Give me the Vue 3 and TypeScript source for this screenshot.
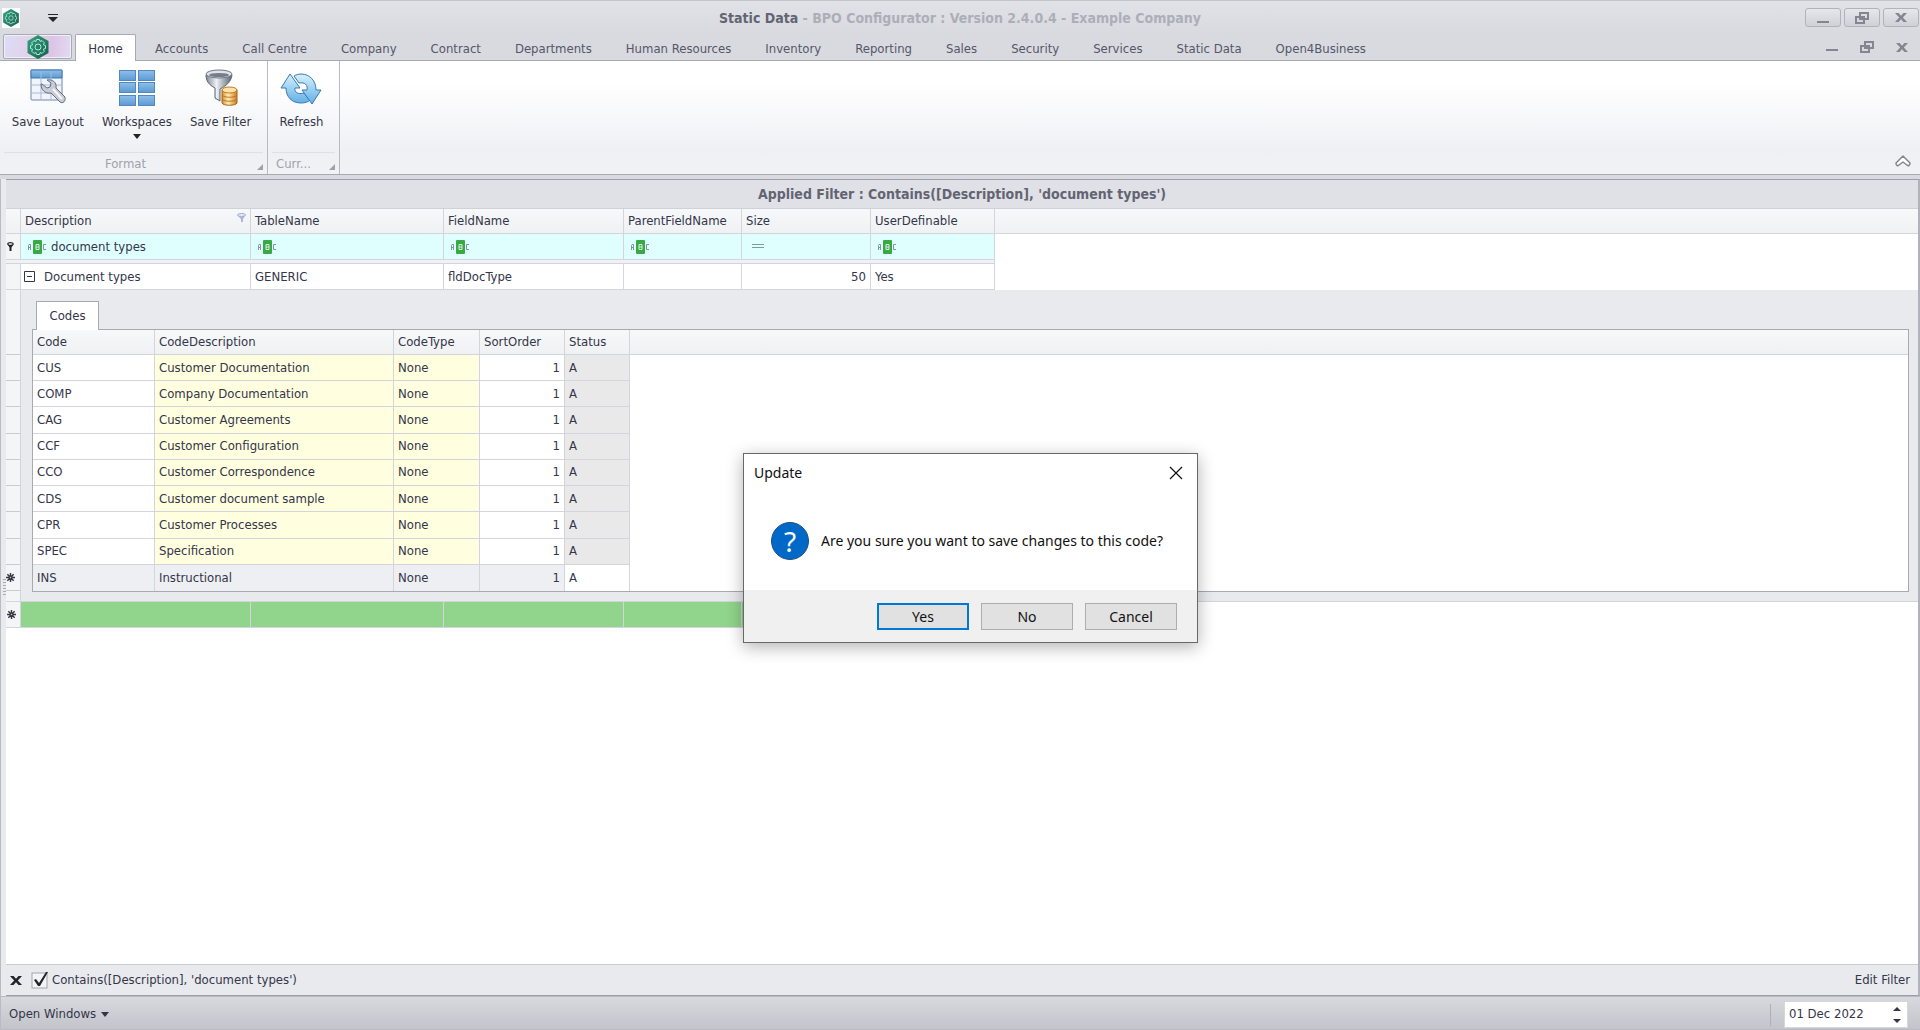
<script setup lang="ts">
import { ref } from 'vue'

interface CodeRow {
  code: string
  description: string
}

const tabs: string[] = [
  'Home', 'Accounts', 'Call Centre', 'Company', 'Contract', 'Departments', 'Human Resources',
  'Inventory', 'Reporting', 'Sales', 'Security', 'Services', 'Static Data', 'Open4Business',
]
const columns: string[] = ['Description', 'TableName', 'FieldName', 'ParentFieldName', 'Size', 'UserDefinable']
const codes: CodeRow[] = [
  { code: 'CUS', description: 'Customer Documentation' },
  { code: 'COMP', description: 'Company Documentation' },
  { code: 'CAG', description: 'Customer Agreements' },
  { code: 'CCF', description: 'Customer Configuration' },
  { code: 'CCO', description: 'Customer Correspondence' },
  { code: 'CDS', description: 'Customer document sample' },
  { code: 'CPR', description: 'Customer Processes' },
  { code: 'SPEC', description: 'Specification' },
  { code: 'INS', description: 'Instructional' },
]

const activeTab = ref('Home')
const filterText = ref('document types')
const filterOn = ref(true)
const workDate = ref('01 Dec 2022')
const dialogOpen = ref(true)
</script>

<template>
  <div class="app">
    <svg class="defs" width="0" height="0" aria-hidden="true">
      <defs>
        <linearGradient id="g-green" x1="0" y1="0" x2="1" y2="1">
          <stop offset="0" stop-color="#35a583" /><stop offset="1" stop-color="#125f4a" />
        </linearGradient>
        <linearGradient id="g-blue" x1="0" y1="0" x2="0" y2="1">
          <stop offset="0" stop-color="#8fbfe8" /><stop offset="1" stop-color="#5b9ad2" />
        </linearGradient>
        <linearGradient id="g-sky" x1="0" y1="0" x2="0" y2="1">
          <stop offset="0" stop-color="#d8f1fc" /><stop offset="1" stop-color="#62b0e6" />
        </linearGradient>
        <linearGradient id="g-steel" x1="0" y1="0" x2="1" y2="0">
          <stop offset="0" stop-color="#7f8794" /><stop offset="0.4" stop-color="#eef1f5" /><stop offset="1" stop-color="#59616f" />
        </linearGradient>
        <linearGradient id="g-gold" x1="0" y1="0" x2="1" y2="0">
          <stop offset="0" stop-color="#d98a1e" /><stop offset="0.4" stop-color="#fff0b8" /><stop offset="1" stop-color="#d07a18" />
        </linearGradient>
        <symbol id="logo" viewBox="0 0 24 24">
          <path d="M12 0 22.500 6v12L12 24 1.500 18V6z" fill="url(#g-green)" />
          <g fill="none" stroke="#b9e6d6">
            <path stroke-width="1" d="M10.500 4.500h3l.6 2 2-.9 2.200 2.200-.9 2 2.100.7v3l-2.100.7.9 2-2.200 2.200-2-.9-.6 2h-3l-.6-2-2 .9-2.200-2.200.9-2-2.100-.7v-3l2.100-.7-.9-2 2.200-2.200 2 .9z" />
            <circle cx="12" cy="12" r="3" stroke-width="1" />
          </g>
        </symbol>
        <symbol id="restore" viewBox="0 0 14 12">
          <path d="M5 1h8v6H5z M1 5h8v6H1z" fill="none" stroke="#83858f" stroke-width="2" />
        </symbol>
        <symbol id="cross" viewBox="0 0 12 9">
          <path d="M0 0h3.500L6 2.800 8.500 0H12L7.800 4.500 12 9H8.500L6 6.200 3.500 9H0l4.200-4.500z" />
        </symbol>
        <symbol id="abc" viewBox="0 0 20 14">
          <path d="M1.500 10V5.500L2 4.500h1.500V10M1.500 7.500h2" fill="none" stroke="#7d9896" />
          <rect x="6" y="0" width="9" height="14" rx="1" fill="#39a845" />
          <path d="M9 4.500h3v5H9zM9 7h3" fill="none" stroke="#d9f5e0" />
          <path d="M19 4.500h-2.500v5H19" fill="none" stroke="#7d9896" />
        </symbol>
        <symbol id="star" viewBox="0 0 10 10">
          <path d="M5 0v10M0 5h10M1.500 1.500l7 7M8.500 1.500l-7 7" stroke="#34353f" stroke-width="1.600" />
          <circle cx="5" cy="5" r="0.800" fill="#c9cad2" />
        </symbol>
      </defs>
    </svg>

    <header class="titlebar">
      <div class="quick">
        <svg class="mini-logo" width="18" height="20"><use href="#logo" /></svg>
        <button class="bare" aria-label="Customise quick access">
          <svg width="10" height="8" viewBox="0 0 10 8"><path d="M0 0h10v1H0zM0 3h10L5 8z" fill="#23232d" /></svg>
        </button>
      </div>
      <h1><strong>Static Data</strong> - BPO Configurator : Version 2.4.0.4 - Example Company</h1>
      <div class="window-buttons">
        <button aria-label="Minimise"><svg width="12" height="12"><path d="M0 9h12v2H0z" fill="#83858f" /></svg></button>
        <button aria-label="Restore"><svg width="14" height="12"><use href="#restore" /></svg></button>
        <button aria-label="Close"><svg width="12" height="9" fill="#83858f"><use href="#cross" /></svg></button>
      </div>
    </header>

    <nav class="tabs">
      <button class="app-button" aria-label="Application menu"><svg width="24" height="24"><use href="#logo" /></svg></button>
      <button v-for="tab in tabs" :key="tab" class="tab" :class="{ active: tab === activeTab }" @click="activeTab = tab">{{ tab }}</button>
      <div class="child-buttons">
        <button class="bare" aria-label="Minimise child"><svg width="12" height="12"><path d="M0 8h12v2H0z" fill="#83858f" /></svg></button>
        <button class="bare" aria-label="Restore child"><svg width="14" height="12"><use href="#restore" /></svg></button>
        <button class="bare" aria-label="Close child"><svg width="12" height="9" fill="#83858f"><use href="#cross" /></svg></button>
      </div>
    </nav>

    <section class="ribbon">
      <div class="group format">
        <div class="tools">
          <button class="tool">
            <svg width="38" height="38" viewBox="0 0 38 38">
              <rect x="2" y="1" width="31" height="30" rx="1" fill="#f1f5fb" stroke="#6e86b0" />
              <path d="M2 1h31v8H2z" fill="url(#g-blue)" stroke="#3f78b5" />
              <path d="M12 2v29M22 2v29M2 16h31M2 24h31" stroke="#a7b9da" fill="none" />
              <path d="M13 15l5 4 3-1 1-4-4-3c5-1 10 2 9 8l9 9c1 4-2 7-5 5l-9-9c-6 1-10-3-10-9z" fill="#c9ccd5" stroke="#646d80" />
              <path d="M24 20l9 10" stroke="#f5f6f8" stroke-width="2" />
            </svg>
            <span>Save Layout</span>
          </button>
          <button class="tool">
            <svg width="38" height="38" viewBox="0 0 38 38" fill="url(#g-blue)" stroke="#5089c2">
              <rect x="1.500" y="1.500" width="16" height="10" /><rect x="20.500" y="1.500" width="16" height="10" />
              <rect x="1.500" y="13.500" width="16" height="10" /><rect x="20.500" y="13.500" width="16" height="10" />
              <rect x="1.500" y="26.500" width="16" height="10" /><rect x="20.500" y="26.500" width="16" height="10" />
            </svg>
            <span>Workspaces</span>
            <svg width="8" height="5"><path d="M0 0h8L4 5z" fill="#23232d" /></svg>
          </button>
          <button class="tool">
            <svg width="38" height="38" viewBox="0 0 38 38">
              <path d="M4 6c0 6 3 10 9 13v10l5 3V20c6-3 11-7 12-14z" fill="url(#g-steel)" stroke="#5c6470" />
              <ellipse cx="17" cy="5" rx="13" ry="4" fill="#dfe3e8" stroke="#717985" />
              <ellipse cx="17" cy="6" rx="10" ry="2" fill="#747c89" />
              <path d="M20 21v13c1 3 14 3 15 0V21z" fill="url(#g-gold)" stroke="#a5621b" />
              <ellipse cx="27.500" cy="21" rx="7.500" ry="3" fill="#fbe3a4" stroke="#b8762a" />
              <path d="M20 26c2 3 13 3 15 0M20 30c2 3 13 3 15 0" fill="none" stroke="#b8762a" />
            </svg>
            <span>Save Filter</span>
          </button>
        </div>
        <footer>Format<svg width="6" height="6"><path d="M6 0v6H0z" fill="#a0a1aa" /></svg></footer>
      </div>
      <div class="group current">
        <div class="tools">
          <button class="tool">
            <svg width="42" height="38" viewBox="0 0 42 38" fill="url(#g-sky)" stroke="#3979b3" stroke-linejoin="round">
              <path d="M10 5 1 19h5c0 9 6 15 15 15 4 0 7-1 9-3l-6-7c-6 2-10-1-9-5h5z" />
              <path d="M32 35l9-14h-5c0-9-6-16-15-16-3 0-5 1-7 2l5 7c6-1 9 2 8 7h-5z" />
            </svg>
            <span>Refresh</span>
          </button>
        </div>
        <footer>Curr...<svg width="6" height="6"><path d="M6 0v6H0z" fill="#a0a1aa" /></svg></footer>
      </div>
      <button class="bare collapse" aria-label="Collapse ribbon">
        <svg width="16" height="12" viewBox="0 0 16 12" fill="#fff" stroke="#85868f" stroke-width="1.500" stroke-linejoin="round"><path d="M8 1 1 8c0 3 2 3 3 2l4-3 4 3c1 1 3 1 3-2z" /></svg>
      </button>
    </section>

    <main class="workspace">
      <div class="splitter"><i></i></div>
      <div class="panel">
        <h2>Applied Filter : Contains([Description], 'document types')</h2>
        <table class="grid">
          <colgroup>
            <col class="c-ind" /><col class="c-desc" /><col class="c-table" /><col class="c-field" /><col class="c-parent" /><col class="c-size" /><col class="c-user" /><col />
          </colgroup>
          <thead>
            <tr>
              <th></th>
              <th v-for="(column, i) in columns" :key="column">
                <div class="head">{{ column }}
                  <svg v-if="i === 0" width="9" height="10" viewBox="0 0 9 10"><ellipse cx="4.500" cy="2" rx="4" ry="1.500" fill="#e6ebf6" stroke="#9aa9cc" /><path d="M1 3h7L6 6v3H4V6z" fill="#a9b6d6" /></svg>
                </div>
              </th>
              <th class="rest"></th>
            </tr>
          </thead>
          <tbody>
            <tr class="filter-row">
              <td class="ind"><svg width="7" height="9" viewBox="0 0 7 9"><ellipse cx="3.500" cy="2" rx="2.700" ry="1.300" fill="#fff" stroke="#23232d" stroke-width="1.200" /><path d="M1 3h5L4.500 5.500V9h-2V5.500z" fill="#23232d" /></svg></td>
              <td v-for="(column, i) in columns" :key="column">
                <div class="filter-cell">
                  <svg v-if="column === 'Size'" class="equals" width="12" height="5"><path d="M0 0h12v1H0zM0 3h12v1H0z" fill="#8199a3" /></svg>
                  <svg v-else width="20" height="14"><use href="#abc" /></svg>
                  <input v-if="i === 0" v-model="filterText" aria-label="Description filter" />
                </div>
              </td>
              <td class="rest"></td>
            </tr>
            <tr class="divider"><td colspan="7"></td><td class="rest"></td></tr>
            <tr class="data-row">
              <td class="ind"></td>
              <td>
                <div class="expand">
                  <button class="bare" aria-label="Collapse row"><svg width="12" height="12"><path d="M.5.5h10v10H.5zM3 5.500h5" fill="none" stroke="#34354a" /></svg></button>
                  Document types
                </div>
              </td>
              <td>GENERIC</td>
              <td>fldDocType</td>
              <td></td>
              <td class="num">50</td>
              <td>Yes</td>
              <td class="rest"></td>
            </tr>
            <tr class="detail-row">
              <td class="gutter">
                <div class="marks">
                  <i class="top"></i>
                  <i v-for="row in codes" :key="row.code"><svg v-if="row.code === 'INS'" width="9" height="9"><use href="#star" /></svg></i>
                  <i class="bottom"></i>
                </div>
              </td>
              <td colspan="7" class="detail">
                <button class="detail-tab">Codes</button>
                <div class="codes-frame">
                  <table class="codes">
                    <colgroup><col class="k-code" /><col class="k-desc" /><col class="k-type" /><col class="k-sort" /><col class="k-status" /><col /></colgroup>
                    <thead>
                      <tr><th>Code</th><th>CodeDescription</th><th>CodeType</th><th>SortOrder</th><th>Status</th><th class="rest"></th></tr>
                    </thead>
                    <tbody>
                      <tr v-for="row in codes" :key="row.code" :class="{ fresh: row.code === 'INS' }">
                        <td>{{ row.code }}</td>
                        <td class="key">{{ row.description }}</td>
                        <td class="key">None</td>
                        <td class="num">1</td>
                        <td class="status">A</td>
                        <td class="rest"></td>
                      </tr>
                    </tbody>
                  </table>
                </div>
              </td>
            </tr>
            <tr class="new-row">
              <td class="ind"><svg width="9" height="9"><use href="#star" /></svg></td>
              <td v-for="column in columns" :key="column"></td>
              <td class="rest"></td>
            </tr>
          </tbody>
        </table>
        <div class="filter-bar">
          <button class="bare" aria-label="Clear filter"><svg width="12" height="9" fill="#23232d"><use href="#cross" /></svg></button>
          <label><input v-model="filterOn" type="checkbox" />
            <svg class="tick" width="18" height="18" viewBox="0 0 18 18"><rect x="1" y="2" width="15" height="15" fill="#f4f4f6" stroke="#a3a4ac" /><path v-if="filterOn" d="M3 9l2-1 3 4 7-11 2 0-8 14H7z" fill="#23232d" /></svg>
            Contains([Description], 'document types')</label>
          <button class="bare edit">Edit Filter</button>
        </div>
      </div>
    </main>

    <footer class="statusbar">
      <button class="bare open">Open Windows <svg width="8" height="5"><path d="M0 0h8L4 5z" fill="#34354a" /></svg></button>
      <div class="date">
        <input v-model="workDate" aria-label="Date" />
        <div class="spin">
          <button class="bare" aria-label="Next day"><svg width="8" height="4"><path d="M0 4h8L4 0z" fill="#34354a" /></svg></button>
          <button class="bare" aria-label="Previous day"><svg width="8" height="4"><path d="M0 0h8L4 4z" fill="#34354a" /></svg></button>
        </div>
      </div>
    </footer>

    <div v-if="dialogOpen" class="dialog" role="dialog" aria-labelledby="dialog-title">
      <div class="dialog-head">
        <span id="dialog-title">Update</span>
        <button class="bare" aria-label="Close dialog" @click="dialogOpen = false"><svg width="14" height="14"><path d="M1 1l12 12M13 1 1 13" stroke="#111" stroke-width="1.200" /></svg></button>
      </div>
      <div class="dialog-body">
        <div class="question">?</div>
        <p>Are you sure you want to save changes to this code?</p>
      </div>
      <div class="dialog-foot">
        <button class="primary" @click="dialogOpen = false">Yes</button>
        <button @click="dialogOpen = false">No</button>
        <button @click="dialogOpen = false">Cancel</button>
      </div>
    </div>
  </div>
</template>

<style>
body {
  margin: 0;
}
</style>

<style scoped>
* {
  box-sizing: border-box;
}
.app {
  position: relative;
  display: flex;
  flex-direction: column;
  min-height: 100vh;
  background: #fff;
  color: #34354a;
  font: 13px/16px "DejaVu Sans Condensed", "Noto Sans", sans-serif;
}
.defs {
  position: absolute;
}
svg {
  display: block;
  flex: none;
}
button,
input {
  margin: 0;
  padding: 0;
  border: 0;
  background: none;
  color: inherit;
  font: inherit;
}
.titlebar {
  display: grid;
  grid-template-columns: 120px 1fr 120px;
  align-items: center;
  height: 34px;
  border-top: 1px solid #c3c5cd;
  background: linear-gradient(#e1e2e7, #d9dadf);
}
.quick {
  display: flex;
  align-items: center;
  gap: 28px;
  padding-left: 2px;
}
.mini-logo {
  background: #fff;
}
h1 {
  margin: 0;
  color: #acaeb8;
  font-size: 14px;
  line-height: 16px;
  text-align: center;
}
h1 strong {
  color: #636473;
}
.window-buttons {
  display: flex;
  justify-content: flex-end;
  gap: 3px;
  padding-right: 1px;
}
.window-buttons button {
  display: grid;
  place-items: center;
  width: 36px;
  height: 19px;
  border: 1px solid #b1b3bc;
  border-radius: 3px;
  background: linear-gradient(#e6e7eb, #d0d1d7);
}
.tabs {
  display: flex;
  height: 27px;
  padding-left: 3px;
  border-bottom: 1px solid #a7a9b3;
  background: #d9dadf;
}
.app-button {
  display: grid;
  place-items: center;
  width: 69px;
  height: 25px;
  margin-right: 3px;
  border: 1px solid #a7a9b3;
  border-radius: 2px;
  box-shadow: inset 0 0 0 1px #f0eff5;
  background: linear-gradient(100deg, #dcdcf6, #e4d0ea 45%, #dcc4e6 70%, #e2dcf2);
}
.tab {
  height: 27px;
  padding: 2px 16px 0;
  border: 1px solid transparent;
  border-bottom: 0;
  color: #55566a;
  white-space: nowrap;
}
.tab.active {
  width: 61px;
  padding: 2px 0 0;
  margin-right: 2px;
  border-color: #a7a9b3;
  border-radius: 2px 2px 0 0;
  background: #fff;
  color: #34354a;
}
.child-buttons {
  display: flex;
  align-items: center;
  gap: 22px;
  margin-left: auto;
  padding-right: 12px;
}
.ribbon {
  display: flex;
  height: 114px;
  border-bottom: 1px solid #a7a9b3;
  background: linear-gradient(#fff, #fff 20%, #eff0f4 80%, #f1f2f5);
}
.group {
  display: flex;
  flex-direction: column;
  border-right: 1px solid #b9bbc4;
}
.format {
  width: 268px;
}
.current {
  width: 72px;
}
.tools {
  display: flex;
  flex: 1;
  justify-content: center;
  gap: 18px;
  padding: 8px 4px 0 0;
}
.tool {
  display: flex;
  flex-direction: column;
  align-items: center;
  gap: 7px;
  white-space: nowrap;
  align-self: flex-start;
}
.tool svg + span + svg {
  margin-top: -3px;
}
.group footer {
  position: relative;
  height: 22px;
  margin: 0 4px;
  padding-left: 4px;
  border-top: 1px solid #dfe0e5;
  color: #9fa1ac;
  line-height: 21px;
}
.format footer {
  padding: 0 16px 0 0;
  text-align: center;
}
.group footer svg {
  position: absolute;
  right: 0;
  bottom: 4px;
}
.collapse {
  align-self: flex-end;
  margin: 0 9px 7px auto;
}
.workspace {
  display: flex;
  flex: 1;
  padding-top: 4px;
  background: #d9dadf;
}
.splitter {
  display: flex;
  align-items: center;
  width: 6px;
  padding-left: 2px;
  border-left: 1px solid #b9bbc4;
  background: #e9eaee;
}
.splitter i {
  width: 3px;
  height: 18px;
  background: repeating-linear-gradient(#a9abb5 0 1px, #e9eaee 1px 3px);
}
.panel {
  display: flex;
  flex: 1;
  flex-direction: column;
  min-width: 0;
  border-top: 1px solid #9c9eaa;
  border-right: 2px solid #b1b3bc;
  border-bottom: 1px solid #9c9eaa;
  background: #fff;
}
h2 {
  height: 29px;
  margin: 0;
  border-bottom: 1px solid #d0d1d7;
  background: #e0e1e6;
  color: #636473;
  font-size: 14px;
  line-height: 28px;
  text-align: center;
}
table {
  width: 100%;
  border-collapse: separate;
  border-spacing: 0;
  table-layout: fixed;
}
th,
td {
  height: 26px;
  padding: 0 4px;
  border: solid #d3d4dd;
  border-width: 0 1px 1px 0;
  font-weight: normal;
  text-align: left;
  white-space: nowrap;
}
th {
  height: 25px;
  background: linear-gradient(#f7f8f9, #f0f1f3);
}
.rest {
  border-right: 0;
}
td.rest {
  border-bottom: 0;
}
.c-ind {
  width: 15px;
}
.c-desc {
  width: 230px;
}
.c-table {
  width: 193px;
}
.c-field {
  width: 180px;
}
.c-parent {
  width: 118px;
}
.c-size {
  width: 129px;
}
.c-user {
  width: 124px;
}
.head,
.filter-cell,
.expand {
  display: flex;
  align-items: center;
}
.head {
  justify-content: space-between;
}
.head svg {
  align-self: flex-start;
}
td.ind {
  padding: 0 0 0 1px;
  background: #f4f5f7;
}
.filter-row td {
  background: #dfffff;
}
.filter-row td.ind {
  background: #f4f5f7;
}
.filter-row td.rest {
  background: #fff;
}
.filter-cell {
  gap: 4px;
  padding-left: 2px;
}
.filter-cell input {
  flex: 1;
  min-width: 0;
}
.equals {
  margin-left: 4px;
}
.divider td {
  height: 4px;
  padding: 0;
  background: #f0f1f5;
}
.divider td.rest {
  background: #fff;
}
.expand {
  gap: 8px;
  margin-left: -1px;
}
.num {
  text-align: right;
}
td.gutter {
  height: 1px;
  padding: 0;
  background: #f4f5f7;
}
.marks {
  display: flex;
  flex-direction: column;
  height: 311px;
}
.marks i {
  display: flex;
  flex: 1;
  align-items: center;
  border-bottom: 1px solid #c9cbd3;
}
.marks .top {
  flex: 0 0 65px;
}
.marks .bottom {
  flex: 0 0 10px;
  border-bottom: 0;
}
td.detail {
  padding: 11px 9px 9px 11px;
  border-right: 0;
  background: #e9eaee;
}
.detail-tab {
  display: block;
  position: relative;
  width: 63px;
  height: 29px;
  margin: 0 0 -1px 4px;
  border: 1px solid #a7a9b3;
  border-bottom: 0;
  background: #fff;
}
.codes-frame {
  border: 1px solid #a7a9b3;
  background: #fff;
}
.codes {
  height: 261px;
}
.codes tbody tr:last-child td {
  border-bottom: 0;
}
.k-code {
  width: 122px;
}
.k-desc {
  width: 239px;
}
.k-type {
  width: 86px;
}
.k-sort {
  width: 85px;
}
.k-status {
  width: 65px;
}
.key {
  background: #ffffe0;
}
.status {
  background: #e9e9e9;
}
.fresh td {
  background: #eeeff2;
}
.fresh td.status,
.fresh td.rest {
  background: #fff;
}
.new-row td {
  background: #91d48b;
}
.new-row td.ind {
  background: #f4f5f7;
}
.new-row td.rest {
  background: #fff;
}
.filter-bar {
  display: flex;
  align-items: center;
  gap: 9px;
  height: 31px;
  margin-top: auto;
  padding: 0 8px 0 4px;
  border-top: 1px solid #c9cbd3;
  background: #e9eaee;
}
.filter-bar label {
  display: flex;
  align-items: center;
  gap: 3px;
}
.filter-bar input {
  position: absolute;
  opacity: 0;
}
.edit {
  margin-left: auto;
}
.statusbar {
  display: flex;
  align-items: center;
  justify-content: space-between;
  height: 34px;
  padding: 2px 12px 0 8px;
  border: solid #b9bbc4;
  border-width: 1px 0 1px 1px;
  background: linear-gradient(#d8d9de, #c3c4cb);
}
.open {
  display: flex;
  align-items: center;
  gap: 5px;
}
.date {
  display: flex;
  position: relative;
  width: 124px;
  height: 27px;
  padding: 0 6px 0 4px;
  border: 1px solid #d6d7dc;
  background: #fff;
}
.date::before {
  content: "";
  position: absolute;
  top: 2px;
  left: -15px;
  width: 1px;
  height: 22px;
  background: #aeb0b9;
}
.date input {
  flex: 1;
  min-width: 0;
}
.spin {
  display: flex;
  flex-direction: column;
  justify-content: space-between;
  padding: 5px 0 4px;
}
.dialog {
  position: absolute;
  top: 453px;
  left: 743px;
  width: 455px;
  border: 1px solid #686868;
  background: #fff;
  box-shadow: 0 4px 16px rgba(0, 0, 0, 0.3);
  color: #111;
  font: 14px/18px "Noto Sans", sans-serif;
}
.dialog-head {
  display: flex;
  align-items: center;
  justify-content: space-between;
  height: 38px;
  padding: 0 14px 0 10px;
}
.dialog-body {
  display: flex;
  align-items: center;
  gap: 12px;
  height: 98px;
  padding: 0 27px;
}
.dialog-body p {
  margin: 0;
}
.question {
  width: 38px;
  height: 38px;
  border: 1px solid #1c4f85;
  border-radius: 50%;
  background: #0069c8;
  color: #fff;
  font-size: 28px;
  line-height: 36px;
  text-align: center;
}
.dialog-foot {
  display: flex;
  justify-content: flex-end;
  gap: 12px;
  padding: 13px 20px 12px;
  background: #f0f0f0;
}
.dialog-foot button {
  width: 92px;
  height: 27px;
  border: 1px solid #adadad;
  background: #e1e1e1;
}
.dialog-foot .primary {
  border: 2px solid #0078d7;
}
</style>
